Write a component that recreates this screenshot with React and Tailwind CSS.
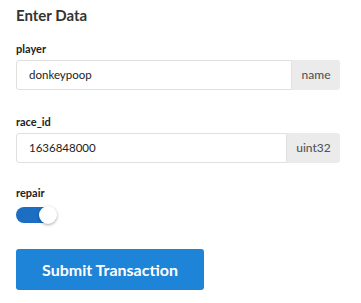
export default function App() {
  return (
    <div className="w-[361px] h-[303px] bg-white px-4 pt-[5px] text-[#222]" style={{ fontFamily: "Lato, 'Open Sans', sans-serif" }}>
      <h2 className="text-[15px] font-bold text-[#333] leading-[20px]">Enter Data</h2>
      <div className="mt-[17px]">
        <div className="text-[11px] font-bold leading-[14px] text-[#222]">player</div>
        <div className="mt-[4px] flex h-[30px] w-[324px]">
          <div className="flex-1 flex items-center border border-[#e0e0e0] rounded-l-[3px] pl-[12px] text-[11.5px] text-[#222]">donkeypoop</div>
          <div className="flex items-center bg-[#ebebeb] text-[12px] text-[#555] font-medium rounded-r-[3px] w-[48px] justify-center">name</div>
        </div>
      </div>
      <div className="mt-[25px]">
        <div className="text-[11px] font-bold leading-[14px] text-[#222]">race_id</div>
        <div className="mt-[4px] flex h-[30px] w-[324px]">
          <div className="flex-1 flex items-center border border-[#e0e0e0] rounded-l-[3px] pl-[12px] text-[11.5px] text-[#222]">1636848000</div>
          <div className="flex items-center bg-[#ebebeb] text-[12px] text-[#555] font-medium rounded-r-[3px] w-[53px] justify-center">uint32</div>
        </div>
      </div>
      <div className="mt-[23px]">
        <div className="text-[11px] font-bold leading-[14px] text-[#222]">repair</div>
        <div className="mt-[7px] relative w-[41px] h-[16px]">
          <div className="absolute left-0 top-0 w-[40px] h-[16px] rounded-full bg-[#1b6ec2]" />
          <div className="absolute right-0 top-[-1px] w-[18px] h-[18px] rounded-full bg-white shadow-[0_1px_3px_rgba(0,0,0,0.35)]" />
        </div>
      </div>
      <button className="mt-[26px] w-[188px] h-[41px] rounded-[3px] bg-[#1e84d8] text-white text-[16px] font-bold">Submit Transaction</button>
    </div>
  );
}
